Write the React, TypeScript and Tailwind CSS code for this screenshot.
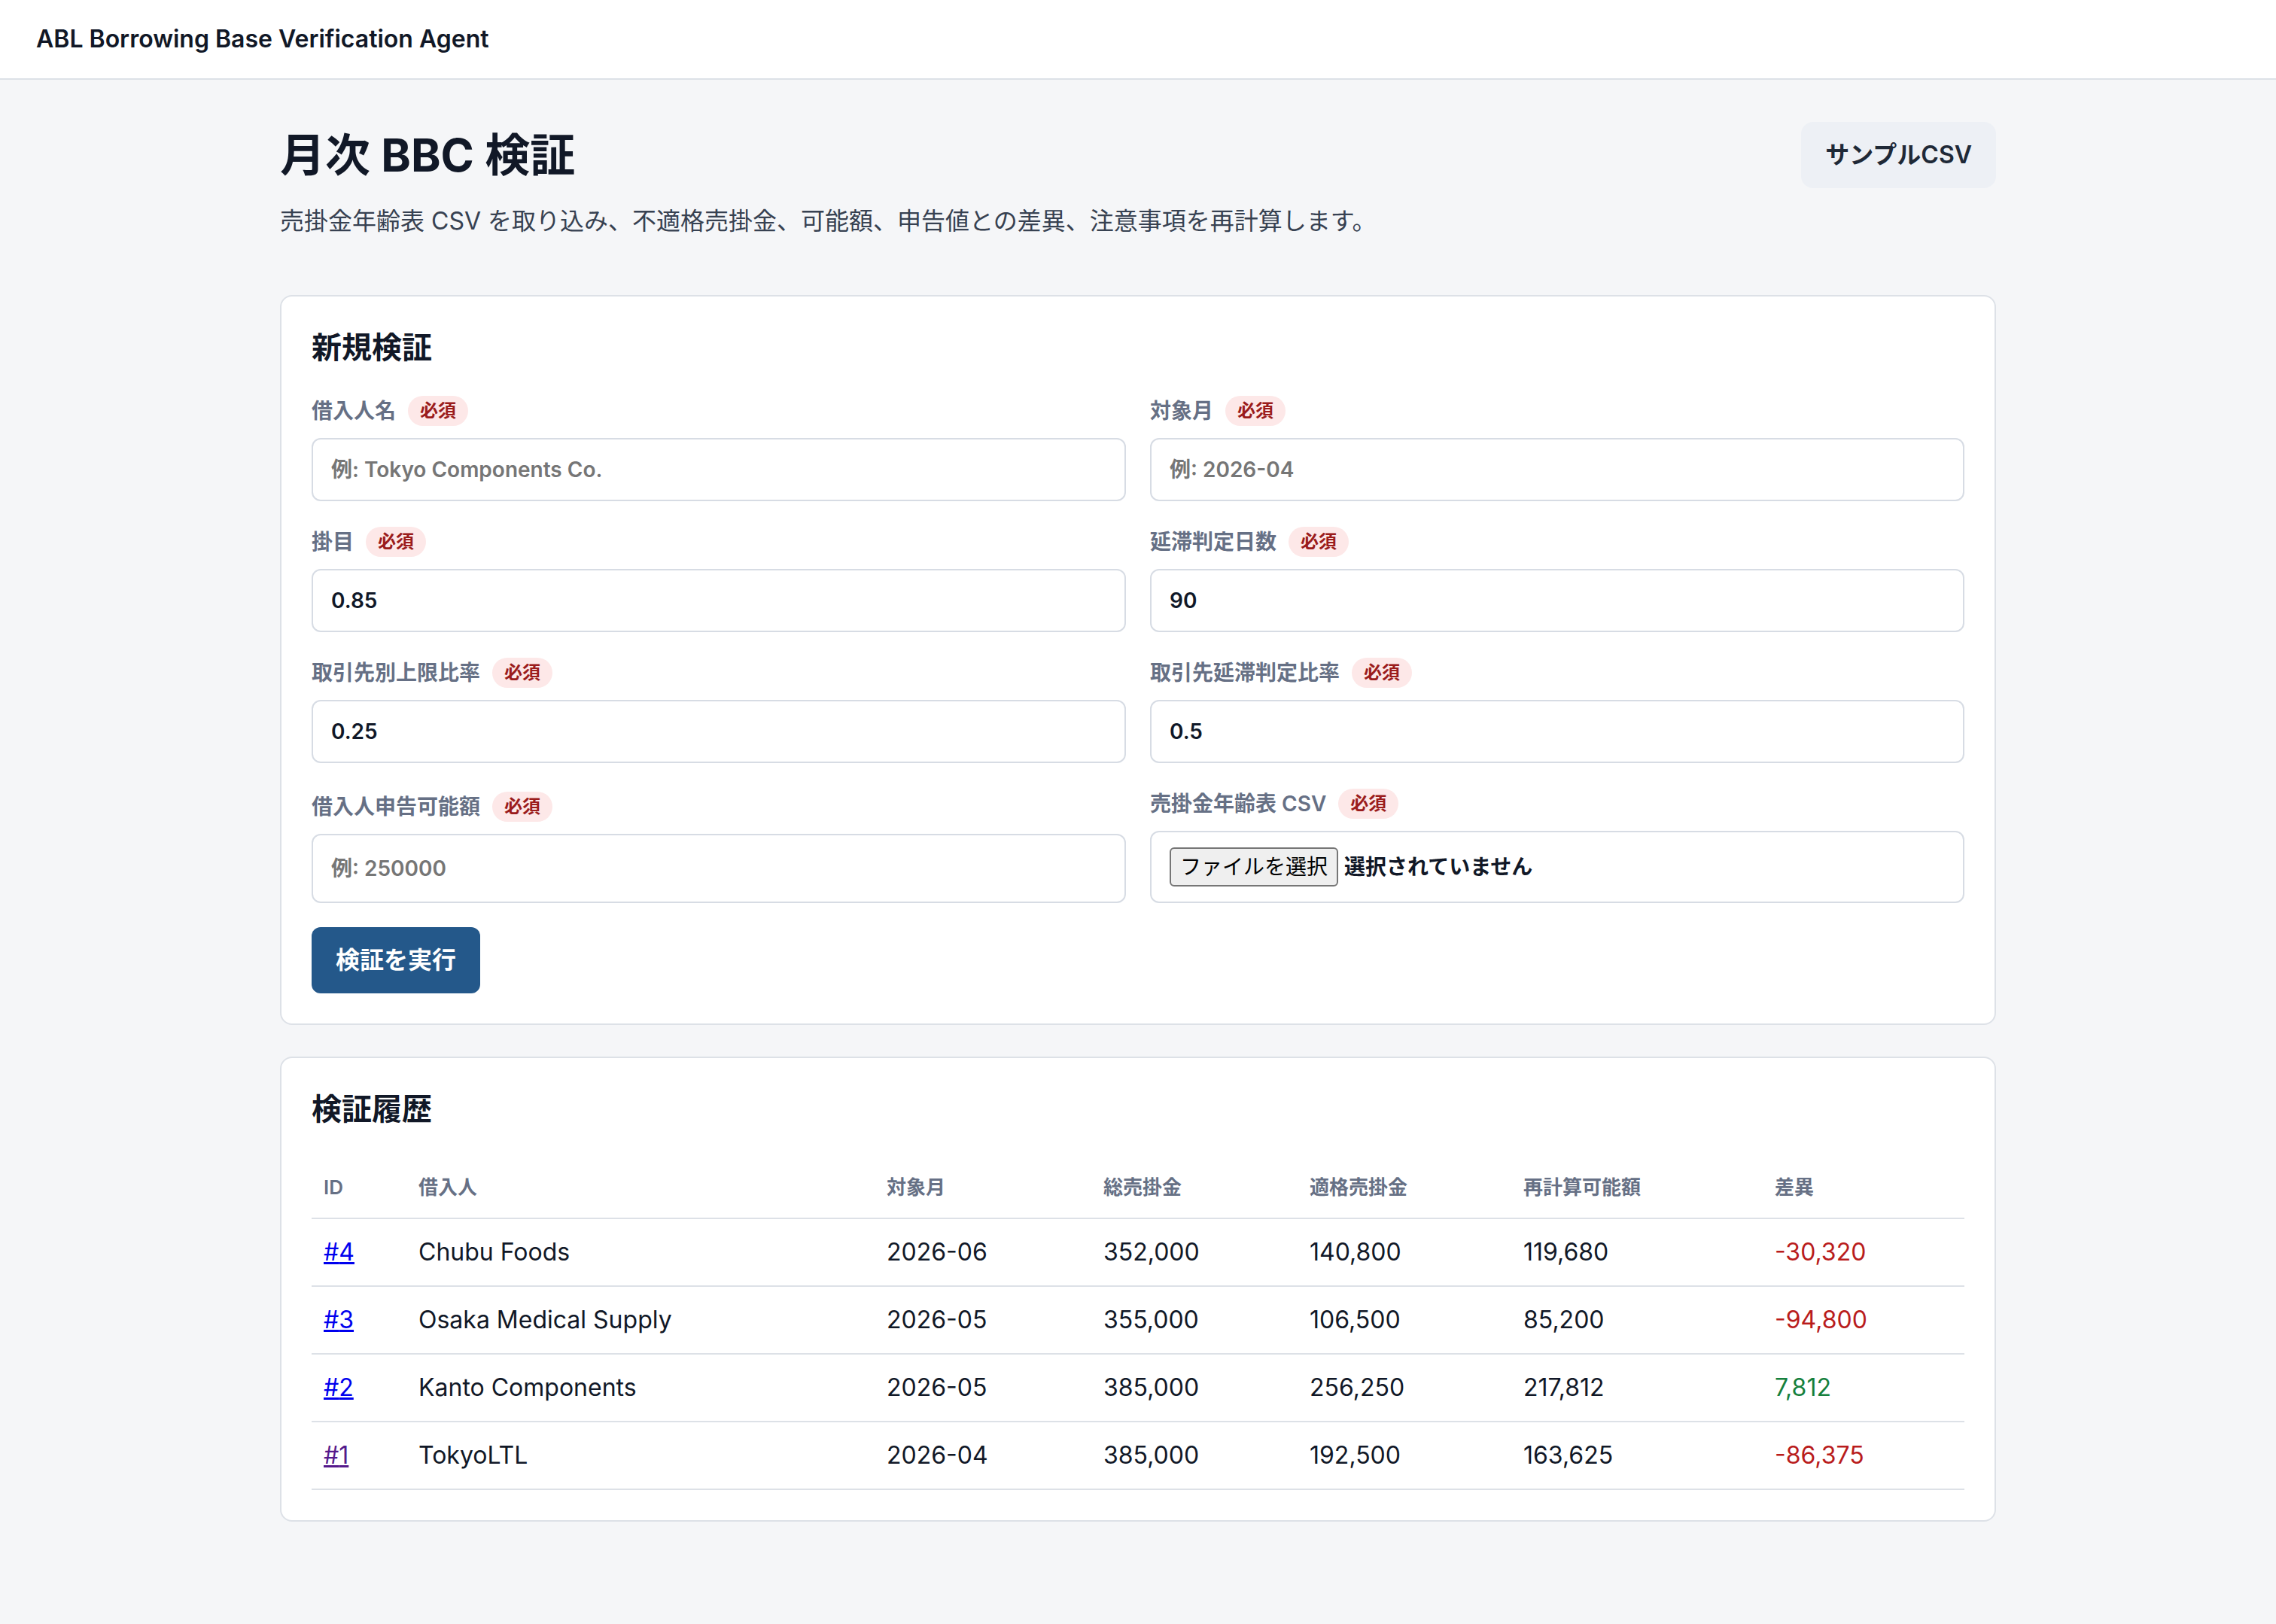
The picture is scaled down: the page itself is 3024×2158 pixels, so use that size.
import React, { useState } from "react";

// Borrowing-base verification screen: entry form + history table.
type Run = {
  id: number;
  borrower: string;
  month: string;
  total: string;
  eligible: string;
  recalculated: string;
  diff: string;
  visited?: boolean;
};

const runs: Run[] = [
  { id: 4, borrower: "Chubu Foods", month: "2026-06", total: "352,000", eligible: "140,800", recalculated: "119,680", diff: "-30,320" },
  { id: 3, borrower: "Osaka Medical Supply", month: "2026-05", total: "355,000", eligible: "106,500", recalculated: "85,200", diff: "-94,800" },
  { id: 2, borrower: "Kanto Components", month: "2026-05", total: "385,000", eligible: "256,250", recalculated: "217,812", diff: "7,812" },
  { id: 1, borrower: "TokyoLTL", month: "2026-04", total: "385,000", eligible: "192,500", recalculated: "163,625", diff: "-86,375", visited: true },
];

function Required() {
  return (
    <span className="rounded-full bg-[#fde8e8] px-2 py-0.5 text-xs leading-4 font-bold text-[#9b1c1c]">
      必須
    </span>
  );
}

function FieldLabel({ children }: { children: React.ReactNode }) {
  return (
    <div className="flex h-5 items-center gap-2">
      <span className="text-sm font-semibold text-[#667085]">{children}</span>
      <Required />
    </div>
  );
}

function TextField({
  label,
  placeholder,
  defaultValue,
  className = "",
}: {
  label: string;
  placeholder?: string;
  defaultValue?: string;
  className?: string;
}) {
  return (
    <label className={`flex flex-col ${className}`}>
      <FieldLabel>{label}</FieldLabel>
      <input
        type="text"
        placeholder={placeholder}
        defaultValue={defaultValue}
        className="mt-2 w-full flex-1 rounded-md border border-[#d7dce4] bg-white px-3 py-2.5 text-sm leading-5 font-semibold text-gray-900 placeholder:text-[#767676] focus:outline-none"
      />
    </label>
  );
}

export default function App() {
  const [fileName, setFileName] = useState<string | null>(null);

  return (
    <div className="min-h-screen bg-[#f5f6f8]">
      <div className="[zoom:2] font-['Inter','Noto_Sans_CJK_JP',sans-serif] text-gray-900">
        <header className="border-b border-[#dde1e7] bg-white px-6 py-3.5">
          <h1 className="text-base leading-6 font-semibold text-[#111827]">
            ABL Borrowing Base Verification Agent
          </h1>
        </header>

        <main className="mx-auto max-w-[1140px] pt-7 pb-16">
          <div className="flex items-center justify-between">
            <h2 className="text-3xl leading-9 font-bold text-[#111827]">月次 BBC 検証</h2>
            <button className="rounded-lg bg-[#edf0f5] px-4 py-2.5 text-base leading-6 font-semibold text-[#1f2937]">
              サンプルCSV
            </button>
          </div>
          <p className="mt-2.5 text-base leading-6 text-[#374151]">
            売掛金年齢表 CSV を取り込み、不適格売掛金、可能額、申告値との差異、注意事項を再計算します。
          </p>

          {/* new verification form */}
          <section className="mt-[37px] rounded-lg border border-[#dde1e7] bg-white p-5">
            <h3 className="text-xl leading-7 font-bold text-[#111827]">新規検証</h3>
            <form className="mt-[18px]" onSubmit={(e) => e.preventDefault()}>
              <div className="grid grid-cols-2 gap-x-4 gap-y-[17px]">
                <TextField label="借入人名" placeholder="例: Tokyo Components Co." />
                <TextField label="対象月" placeholder="例: 2026-04" />
                <TextField label="掛目" defaultValue="0.85" />
                <TextField label="延滞判定日数" defaultValue="90" />
                <TextField label="取引先別上限比率" defaultValue="0.25" />
                <TextField label="取引先延滞判定比率" defaultValue="0.5" />
                <TextField label="借入人申告可能額" placeholder="例: 250000" className="pt-0.5" />
                <label className="flex flex-col">
                  <FieldLabel>売掛金年齢表 CSV</FieldLabel>
                  <div className="mt-2 flex items-center rounded-md border border-[#d7dce4] bg-white px-3 py-2.5">
                    <span className="rounded-[3px] border border-[#767676] bg-[#efefef] px-1.5 py-0.5 text-sm leading-5 text-black">
                      ファイルを選択
                    </span>
                    <span className="ml-1 text-sm leading-5 font-semibold text-[#111827]">
                      {fileName ?? "選択されていません"}
                    </span>
                    <input
                      type="file"
                      accept=".csv"
                      className="hidden"
                      onChange={(e) => setFileName(e.target.files?.[0]?.name ?? null)}
                    />
                  </div>
                </label>
              </div>
              <button
                type="submit"
                className="mt-4 rounded-md bg-[#24588a] px-4 py-2.5 text-base leading-6 font-bold text-white"
              >
                検証を実行
              </button>
            </form>
          </section>

          {/* history */}
          <section className="mt-[21px] rounded-lg border border-[#dde1e7] bg-white p-5">
            <h3 className="text-xl leading-7 font-bold text-[#111827]">検証履歴</h3>
            <table className="mt-[18px] w-full table-fixed border-collapse text-left">
              <thead>
                <tr className="border-b border-[#dde1e7] text-[13px] leading-5 font-semibold text-[#667085]">
                  <th className="w-[63px] px-2 py-2.5 font-semibold">ID</th>
                  <th className="w-[311px] px-2 py-2.5 font-semibold">借入人</th>
                  <th className="w-[144px] px-2 py-2.5 font-semibold">対象月</th>
                  <th className="w-[137px] px-2 py-2.5 font-semibold">総売掛金</th>
                  <th className="w-[142px] px-2 py-2.5 font-semibold">適格売掛金</th>
                  <th className="w-[167px] px-2 py-2.5 font-semibold">再計算可能額</th>
                  <th className="px-2 py-2.5 font-semibold">差異</th>
                </tr>
              </thead>
              <tbody className="text-base leading-6 text-[#111827]">
                {runs.map((r) => (
                  <tr key={r.id} className="border-b border-[#dde1e7]">
                    <td className="px-2 py-2.5">
                      <a
                        href={`#run-${r.id}`}
                        className={r.visited ? "text-[#551a8b] underline" : "text-[#0000ee] underline"}
                      >
                        #{r.id}
                      </a>
                    </td>
                    <td className="px-2 py-2.5">{r.borrower}</td>
                    <td className="px-2 py-2.5">{r.month}</td>
                    <td className="px-2 py-2.5">{r.total}</td>
                    <td className="px-2 py-2.5">{r.eligible}</td>
                    <td className="px-2 py-2.5">{r.recalculated}</td>
                    <td className={r.diff.startsWith("-") ? "px-2 py-2.5 text-[#b91c1c]" : "px-2 py-2.5 text-[#15803d]"}>
                      {r.diff}
                    </td>
                  </tr>
                ))}
              </tbody>
            </table>
          </section>
        </main>
      </div>
    </div>
  );
}
